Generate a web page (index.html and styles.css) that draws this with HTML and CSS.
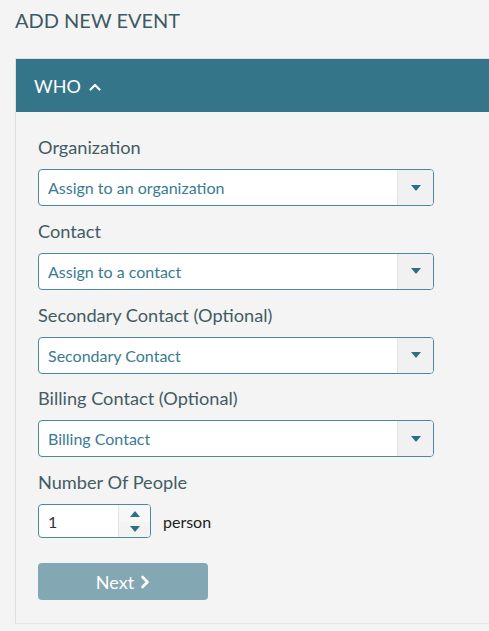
FILE: index.html
```
<!DOCTYPE html>
<html>
<head>
<meta charset="utf-8">
<link rel="stylesheet" href="styles.css">
</head>
<body>
<h1 class="title">ADD NEW EVENT</h1>
<section class="panel">
  <div class="panel-head">
    <span class="panel-title">WHO</span>
    <svg class="chev-up" width="12" height="8" viewBox="0 0 12 8"><path d="M1.5 6.5 L6 2 L10.5 6.5" fill="none" stroke="#fff" stroke-width="2.2" stroke-linecap="round" stroke-linejoin="round"/></svg>
  </div>
  <div class="panel-body">
    <div class="field">
      <div class="label">Organization</div>
      <div class="select"><span class="select-text">Assign to an organization</span><span class="select-btn"><span class="tri-down"></span></span></div>
    </div>
    <div class="field">
      <div class="label">Contact</div>
      <div class="select"><span class="select-text">Assign to a contact</span><span class="select-btn"><span class="tri-down"></span></span></div>
    </div>
    <div class="field">
      <div class="label">Secondary Contact (Optional)</div>
      <div class="select"><span class="select-text">Secondary Contact</span><span class="select-btn"><span class="tri-down"></span></span></div>
    </div>
    <div class="field">
      <div class="label">Billing Contact (Optional)</div>
      <div class="select"><span class="select-text">Billing Contact</span><span class="select-btn"><span class="tri-down"></span></span></div>
    </div>
    <div class="field field-last">
      <div class="label">Number Of People</div>
      <div class="number-row">
        <div class="number">
          <span class="number-val">1</span>
          <span class="spinner"><span class="spin"><span class="tri-up"></span></span><span class="spin"><span class="tri-down"></span></span></span>
        </div>
        <span class="unit">person</span>
      </div>
    </div>
    <button class="next">Next <svg class="chev-right" width="10" height="14" viewBox="0 0 10 14"><path d="M2.5 2 L7.5 7 L2.5 12" fill="none" stroke="#fff" stroke-width="2.6" stroke-linecap="round" stroke-linejoin="round"/></svg></button>
  </div>
</section>
</body>
</html>
```
FILE: styles.css
```
html, body {
  margin: 0;
  padding: 0;
  background: #f4f4f4;
  font-family: Lato, "Open Sans", sans-serif;
  overflow: hidden;
}
.title {
  margin: 0;
  padding: 8px 15px 0;
  font-size: 20px;
  font-weight: 400;
  line-height: 24px;
  color: #3d5a62;
  height: 58px;
  box-sizing: border-box;
}
.panel {
  margin-left: 15px;
  border-left: 1px solid #e0e0e0;
  border-top: 1px solid #e0e0e0;
  border-bottom: 1px solid #e6e6e6;
}
.panel-head {
  height: 53px;
  background: #34758a;
  display: flex;
  align-items: center;
  padding-left: 18px;
  gap: 8px;
}
.panel-title {
  color: #fff;
  font-size: 18px;
  line-height: 20px;
  padding-top: 1px;
}
.chev-up { margin-top: 2px; }
.panel-body {
  padding: 23px 22px 23px;
}
.field {
  margin-bottom: 12.8px;
}
.field-last { margin-bottom: 25px; }
.label {
  font-size: 18.2px;
  line-height: 24px;
  color: #435c63;
  margin-bottom: 10px;
}
.select {
  width: 396px;
  height: 37px;
  box-sizing: border-box;
  border: 1px solid #4b889c;
  border-radius: 4px;
  background: #fff;
  display: flex;
  align-items: stretch;
  overflow: hidden;
}
.select-text {
  flex: 1;
  display: flex;
  align-items: center;
  padding-left: 9px;
  font-size: 16px;
  color: #3a7b91;
}
.select-btn {
  width: 35px;
  background: #f1f1f1;
  border-left: 1px solid #e2e2e2;
  display: flex;
  align-items: center;
  justify-content: center;
}
.tri-down {
  width: 0;
  height: 0;
  border-left: 5px solid transparent;
  border-right: 5px solid transparent;
  border-top: 6px solid #2f6f85;
}
.tri-up {
  width: 0;
  height: 0;
  border-left: 5px solid transparent;
  border-right: 5px solid transparent;
  border-bottom: 6px solid #2f6f85;
}
.number-row {
  display: flex;
  align-items: center;
  gap: 12px;
}
.number {
  width: 113px;
  height: 34px;
  box-sizing: border-box;
  border: 1px solid #4b889c;
  border-radius: 4px;
  background: #fff;
  display: flex;
  overflow: hidden;
}
.number-val {
  flex: 1;
  display: flex;
  align-items: center;
  padding-left: 9px;
  font-size: 16px;
  color: #333;
}
.spinner {
  width: 31px;
  border-left: 1px solid #e4e4e4;
  background: #f3f3f3;
  display: flex;
  flex-direction: column;
}
.spin {
  flex: 1;
  display: flex;
  align-items: center;
  justify-content: center;
}
.spin:first-child { background: #f7f7f7; padding-top: 1px; }
.unit {
  font-size: 16px;
  color: #222;
}
.next {
  width: 170px;
  height: 37px;
  border: none;
  border-radius: 4px;
  background: #84a8b3;
  color: #fff;
  font-family: Lato, "Open Sans", sans-serif;
  font-size: 18px;
  display: flex;
  align-items: center;
  justify-content: center;
  gap: 6px;
  padding: 0;
}
```
